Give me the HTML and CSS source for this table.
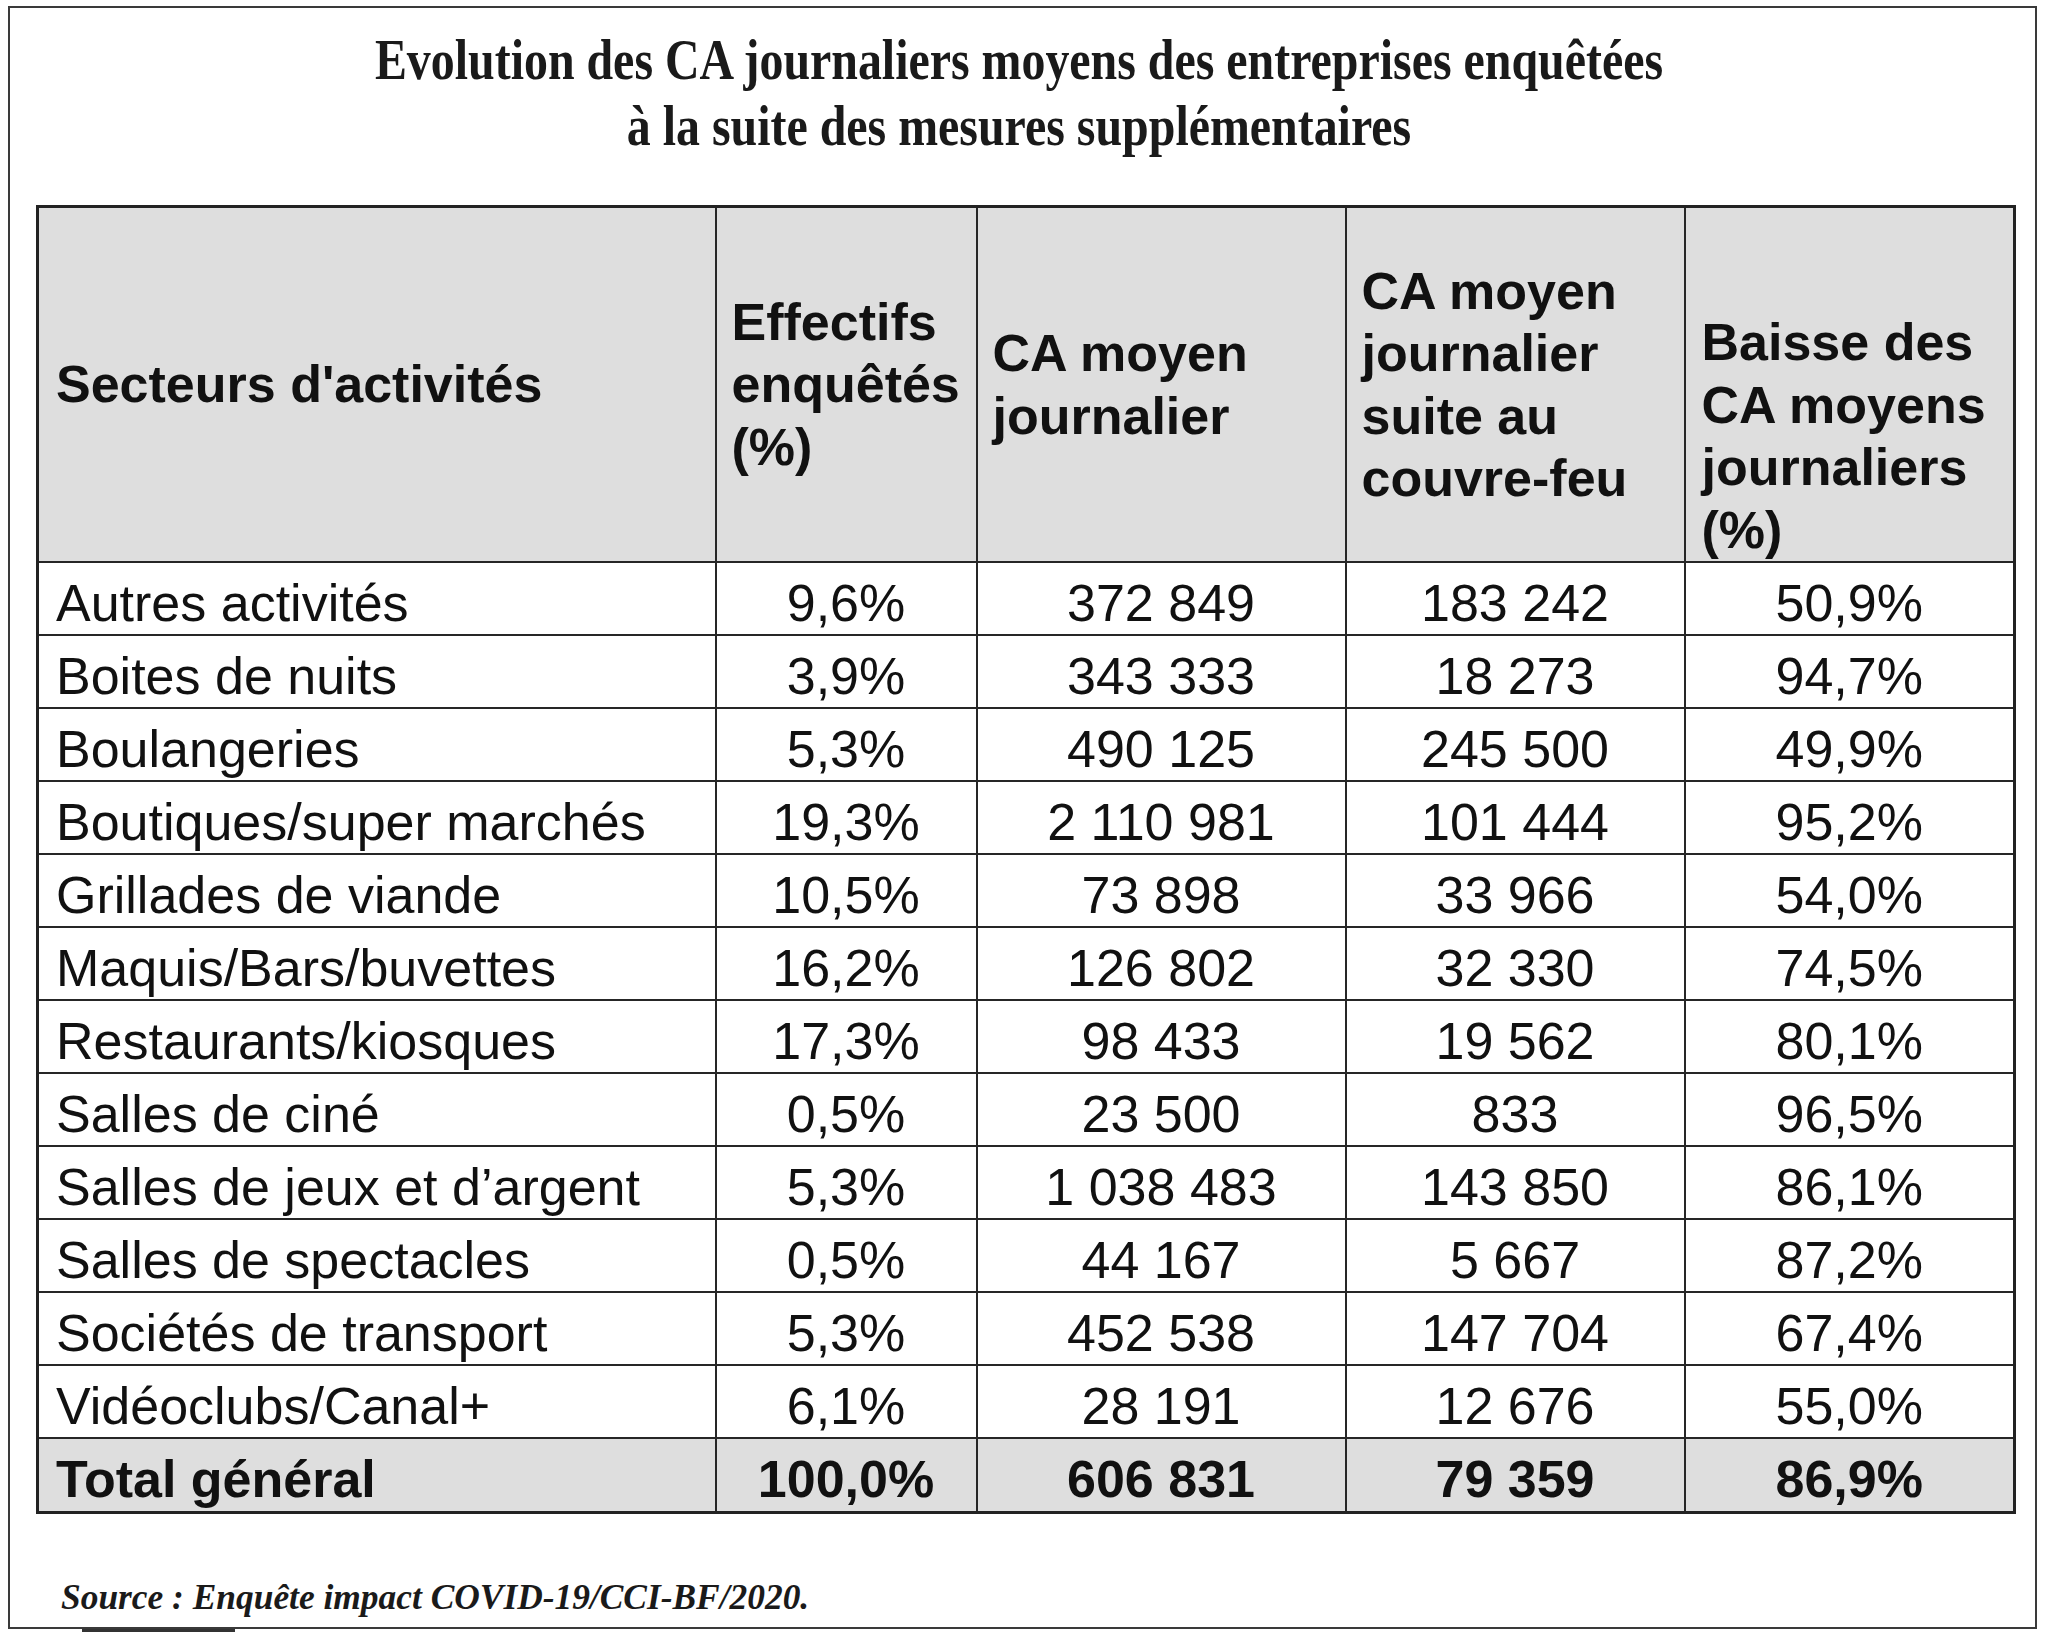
FILE: index.html
```html
<!DOCTYPE html>
<html lang="fr">
<head>
<meta charset="utf-8">
<title>Evolution des CA journaliers moyens</title>
<link rel="stylesheet" href="styles.css">
</head>
<body>
<div class="frame">
  <div class="title">
    <div class="title-line">Evolution des CA journaliers moyens des entreprises enquêtées</div>
    <div class="title-line">à la suite des mesures supplémentaires</div>
  </div>
  <table class="data">
    <colgroup>
      <col class="c1"><col class="c2"><col class="c3"><col class="c4"><col class="c5">
    </colgroup>
    <thead>
      <tr class="head">
        <th class="h-first">Secteurs d'activités</th>
        <th>Effectifs<br>enquêtés<br>(%)</th>
        <th>CA moyen<br>journalier</th>
        <th>CA moyen<br>journalier<br>suite au<br>couvre-feu</th>
        <th class="h-last">Baisse des<br>CA moyens<br>journaliers<br>(%)</th>
      </tr>
    </thead>
    <tbody>
      <tr><td class="name">Autres activités</td><td>9,6%</td><td>372 849</td><td>183 242</td><td>50,9%</td></tr>
      <tr><td class="name">Boites de nuits</td><td>3,9%</td><td>343 333</td><td>18 273</td><td>94,7%</td></tr>
      <tr><td class="name">Boulangeries</td><td>5,3%</td><td>490 125</td><td>245 500</td><td>49,9%</td></tr>
      <tr><td class="name">Boutiques/super marchés</td><td>19,3%</td><td>2 110 981</td><td>101 444</td><td>95,2%</td></tr>
      <tr><td class="name">Grillades de viande</td><td>10,5%</td><td>73 898</td><td>33 966</td><td>54,0%</td></tr>
      <tr><td class="name">Maquis/Bars/buvettes</td><td>16,2%</td><td>126 802</td><td>32 330</td><td>74,5%</td></tr>
      <tr><td class="name">Restaurants/kiosques</td><td>17,3%</td><td>98 433</td><td>19 562</td><td>80,1%</td></tr>
      <tr><td class="name">Salles de ciné</td><td>0,5%</td><td>23 500</td><td>833</td><td>96,5%</td></tr>
      <tr><td class="name">Salles de jeux et d’argent</td><td>5,3%</td><td>1 038 483</td><td>143 850</td><td>86,1%</td></tr>
      <tr><td class="name">Salles de spectacles</td><td>0,5%</td><td>44 167</td><td>5 667</td><td>87,2%</td></tr>
      <tr><td class="name">Sociétés de transport</td><td>5,3%</td><td>452 538</td><td>147 704</td><td>67,4%</td></tr>
      <tr><td class="name">Vidéoclubs/Canal+</td><td>6,1%</td><td>28 191</td><td>12 676</td><td>55,0%</td></tr>
    </tbody>
    <tfoot>
      <tr class="total"><td class="name">Total général</td><td>100,0%</td><td>606 831</td><td>79 359</td><td>86,9%</td></tr>
    </tfoot>
  </table>
  <p class="source">Source : Enquête impact COVID-19/CCI-BF/2020.</p>
</div>
<div class="cut-marks">
  <span class="mark-bar"></span>
</div>
</body>
</html>
```

FILE: styles.css
```css
html, body {
  margin: 0;
  padding: 0;
  background: #ffffff;
}

body {
  font-family: "Liberation Sans", Arial, sans-serif;
  color: #111111;
}

.frame {
  box-sizing: border-box;
  width: 2029px;
  height: 1623px;
  margin: 6px 0 0 8px;
  border: 2px solid #3a3a3a;
  padding: 18px 19px 0 26px;
}

.title {
  font-family: "Liberation Serif", "Times New Roman", serif;
  font-weight: bold;
  font-size: 47.9px;
  line-height: 55px;
  text-align: center;
  color: #1a1a1a;
  padding-right: 14px;
  transform: scaleY(1.2);
  transform-origin: top center;
}

.data {
  margin-top: 69px;
  border-collapse: collapse;
  table-layout: fixed;
  width: 1979px;
  border: 3px solid #222222;
}

.c1 { width: 678px; }
.c2 { width: 261px; }
.c3 { width: 369px; }
.c4 { width: 339px; }
.c5 { width: 330px; }

.data th,
.data td {
  border: 2px solid #262626;
  font-size: 52px;
  padding: 0;
}

.head th {
  height: 353px;
  background: #dedede;
  font-weight: bold;
  text-align: left;
  vertical-align: middle;
  line-height: 62.5px;
  padding: 0 8px 0 15px;
}

.head th.h-first {
  padding-left: 17px;
}

.head th.h-last {
  vertical-align: bottom;
  padding-left: 16px;
}

.data tbody td {
  line-height: 60px;
  padding: 10px 0 1px;
  text-align: center;
  vertical-align: top;
}

.data td.name {
  text-align: left;
  padding-left: 17px;
}

.total td {
  line-height: 60px;
  padding: 10px 0 2px;
  background: #dedede;
  font-weight: bold;
  text-align: center;
  vertical-align: top;
}

.source {
  margin: 63px 0 0 25px;
  font-family: "Liberation Serif", "Times New Roman", serif;
  font-style: italic;
  font-weight: bold;
  font-size: 35.4px;
  line-height: 40px;
  color: #1a1a1a;
}

.cut-marks {
  height: 4px;
  padding-left: 82px;
}

.mark-bar {
  display: block;
  width: 153px;
  height: 3px;
  background: #333333;
}
```
